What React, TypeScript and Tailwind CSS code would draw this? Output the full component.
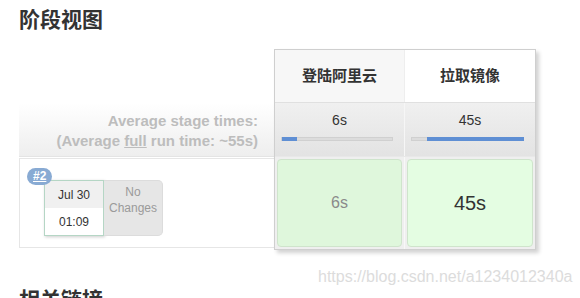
import React from 'react';

const stages = [
  { name: '登陆阿里云', avg: '6s', fillLeft: 0, fillWidth: 15, headBg: 'bg-[#f7f7f7]', cell: '6s', cellBg: 'bg-[#dff7dc]', cellText: 'text-[16px] text-[#8a8a8a]' },
  { name: '拉取镜像', avg: '45s', fillLeft: 15, fillWidth: 97, headBg: 'bg-white', cell: '45s', cellBg: 'bg-[#e4fde2]', cellText: 'text-[20px] text-[#333]' },
];

export default function App() {
  return (
    <div
      className="relative w-[580px] h-[298px] overflow-hidden bg-white text-[#333]"
      style={{ fontFamily: '"Liberation Sans", Arial, "Noto Sans CJK SC", sans-serif' }}
    >
      <div className="pl-[19px] pt-[6px]">
        <h2 className="text-[21px] leading-[28px] font-bold text-[#333]">阶段视图</h2>

        <div className="flex mt-[15px]">
          {/* left column */}
          <div className="w-[255px] flex flex-col">
            <div className="h-[54px]" />
            <div className="h-[54px] bg-gradient-to-b from-white to-[#eeeeee] border-b border-[#e4e4e4] flex flex-col items-end justify-center pr-[16px] pt-[2px] text-[15px] leading-[20px] font-bold text-[#bdbdbd]">
              <div>Average stage times:</div>
              <div>
                (Average <span className="underline">full</span> run time: ~55s)
              </div>
            </div>
            <div className="relative h-[90px] mt-[1px] border border-[#e6e6e6] border-r-0">
              <span className="absolute left-[7px] top-[9px] z-10 h-[17px] px-[6px] rounded-full bg-[#88aad3] text-white text-[12px] leading-[17px] font-bold underline">
                #2
              </span>
              <div className="absolute left-[24px] top-[21px] flex">
                <div className="w-[60px] h-[56px] border border-[#b5d6c5] bg-white shadow-[1px_1px_3px_rgba(0,0,0,0.2)] flex flex-col text-[12px] text-[#333]">
                  <div className="h-[27px] bg-[#f0f0f0] flex items-center justify-center">Jul 30</div>
                  <div className="flex-1 flex items-center justify-center">01:09</div>
                </div>
                <div className="w-[59px] h-[56px] bg-[#e6e6e6] rounded-r-[5px] border border-l-0 border-[#dcdcdc] text-[12px] leading-[16px] text-[#9a9a9a] text-center pt-[3px]">
                  No
                  <br />
                  Changes
                </div>
              </div>
            </div>
          </div>

          {/* stage table */}
          <div className="w-[262px] border border-[#cfcfcf] shadow-[3px_3px_4px_rgba(0,0,0,0.18)] bg-[#f2f2f2] relative z-10">
            <div className="flex h-[53px] border-b border-[#e0e0e0]">
              {stages.map((s, i) => (
                <div
                  key={i}
                  className={`${s.headBg} ${i === 0 ? 'w-[130px] border-r border-[#eeeeee]' : 'flex-1'} flex items-center justify-center text-[15px] font-bold text-[#333]`}
                >
                  {s.name}
                </div>
              ))}
            </div>
            <div className="flex h-[54px] border-b border-[#e8e8e8]">
              {stages.map((s, i) => (
                <div
                  key={i}
                  className={`${i === 0 ? 'w-[130px] border-r border-[#f6f6f6]' : 'flex-1'} bg-gradient-to-b from-[#f0f0f0] to-[#e3e3e3] flex flex-col items-center pt-[8px]`}
                >
                  <div className="text-[14px] leading-[18px] text-[#333]">{s.avg}</div>
                  <div className="relative mt-[8px] mr-[6px] w-[112px] h-[4px] bg-[#dcdcdc] border border-[#d0d0d0]">
                    <div
                      className="absolute top-[-1px] h-[4px] bg-[#5f8fd4]"
                      style={{ left: s.fillLeft, width: s.fillWidth }}
                    />
                  </div>
                </div>
              ))}
            </div>
            <div className="flex h-[92px] bg-[#efefef]">
              {stages.map((s, i) => (
                <div
                  key={i}
                  className={`${i === 0 ? 'w-[130px] border-r border-[#f8f8f8]' : 'flex-1'} p-[2px]`}
                >
                  <div
                    className={`${s.cellBg} ${s.cellText} h-full rounded-[4px] border border-[#cfe4cc] flex items-center justify-center`}
                  >
                    {s.cell}
                  </div>
                </div>
              ))}
            </div>
          </div>
        </div>

        <h2 className="mt-[36px] text-[21px] leading-[28px] font-bold text-[#333]">相关链接</h2>
      </div>

      <div className="absolute left-[318px] top-[265px] text-[16px] text-[#dcdcdc]">
        https://blog.csdn.net/a1234012340a
      </div>
    </div>
  );
}
